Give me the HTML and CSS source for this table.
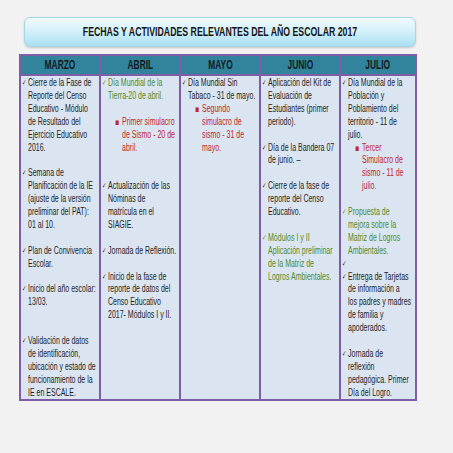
FILE: index.html
```html
<!DOCTYPE html>
<html lang="es">
<head>
<meta charset="utf-8">
<title>Fechas y actividades relevantes del año escolar 2017</title>
<link rel="stylesheet" href="styles.css">
</head>
<body>
<div class="page">
  <div class="title"><span class="narrow">FECHAS Y ACTIVIDADES RELEVANTES DEL AÑO ESCOLAR 2017</span></div>
  <div class="grid">
    <div class="head"><span class="narrow">MARZO</span></div>
    <div class="head"><span class="narrow">ABRIL</span></div>
    <div class="head"><span class="narrow">MAYO</span></div>
    <div class="head"><span class="narrow">JUNIO</span></div>
    <div class="head"><span class="narrow">JULIO</span></div>

    <div class="cell"><div class="col">
      <div class="item"><span class="chk">✓</span><span>Cierre de la Fase de<br>Reporte del Censo<br>Educativo - Módulo<br>de Resultado del<br>Ejercicio Educativo<br>2016.</span></div>
      <div class="item gap1"><span class="chk">✓</span><span>Semana de<br>Planificación de la IE<br>(ajuste de la versión<br>preliminar del PAT):<br>01 al 10.</span></div>
      <div class="item gap1"><span class="chk">✓</span><span>Plan de Convivencia<br>Escolar.</span></div>
      <div class="item gap1"><span class="chk">✓</span><span>Inicio del año escolar:<br>13/03.</span></div>
      <div class="item gap2"><span class="chk">✓</span><span>Validación de datos<br>de identificación,<br>ubicación y estado de<br>funcionamiento de la<br>IE en ESCALE.</span></div>
    </div></div>

    <div class="cell"><div class="col">
      <div class="item green"><span class="chk">✓</span><span>Día Mundial de la<br>Tierra-20 de abril.</span></div>
      <div class="item sub red gap1"><span class="sq">▪</span><span>Primer simulacro<br>de Sismo - 20 de<br>abril.</span></div>
      <div class="item gap2"><span class="chk">✓</span><span>Actualización de las<br>Nóminas de<br>matrícula en el<br>SIAGIE.</span></div>
      <div class="item gap1"><span class="chk">✓</span><span>Jornada de Reflexión.</span></div>
      <div class="item gap1"><span class="chk">✓</span><span>Inicio de la fase de<br>reporte de datos del<br>Censo Educativo<br>2017- Módulos I y II.</span></div>
    </div></div>

    <div class="cell"><div class="col">
      <div class="item"><span class="chk">✓</span><span>Día Mundial Sin<br>Tabaco - 31 de mayo.</span></div>
      <div class="item sub red"><span class="sq">▪</span><span>Segundo<br>simulacro de<br>sismo - 31 de<br>mayo.</span></div>
    </div></div>

    <div class="cell"><div class="col">
      <div class="item"><span class="chk">✓</span><span>Aplicación del Kit de<br>Evaluación de<br>Estudiantes (primer<br>periodo).</span></div>
      <div class="item gap1"><span class="chk">✓</span><span>Día de la Bandera 07<br>de junio. –</span></div>
      <div class="item gap1"><span class="chk">✓</span><span>Cierre de la fase de<br>reporte del Censo<br>Educativo.</span></div>
      <div class="item green gap1"><span class="chk">✓</span><span>Módulos I y II<br>Aplicación preliminar<br>de la Matriz de<br>Logros Ambientales.</span></div>
    </div></div>

    <div class="cell"><div class="col">
      <div class="item"><span class="chk">✓</span><span>Día Mundial de la<br>Población y<br>Poblamiento del<br>territorio - 11 de<br>julio.</span></div>
      <div class="item sub red"><span class="sq">▪</span><span>Tercer<br>Simulacro de<br>sismo - 11 de<br>julio.</span></div>
      <div class="item green gap1"><span class="chk">✓</span><span>Propuesta de<br>mejora sobre la<br>Matriz de Logros<br>Ambientales.</span></div>
      <div class="item"><span class="chk">✓</span><span></span></div>
      <div class="item"><span class="chk">✓</span><span>Entrega de Tarjetas<br>de información a<br>los padres y madres<br>de familia y<br>apoderados.</span></div>
      <div class="item gap1"><span class="chk">✓</span><span>Jornada de<br>reflexión<br>pedagógica. Primer<br>Día del Logro.</span></div>
    </div></div>
  </div>
</div>
</body>
</html>
```

FILE: styles.css
```css
/* Text is condensed horizontally (scaleX 0.7), matching the squeezed
   slide this sheet reproduces; boxes keep their real widths. */
html, body {
  margin: 0;
  padding: 0;
  background: #f2f2f2;
}

body {
  font-family: "Liberation Sans", Arial, sans-serif;
  color: #1e1e1e;
}

.page {
  padding: 17px 0 0 19px;
  width: 398px;
}

.narrow {
  display: inline-block;
  white-space: nowrap;
  transform: scaleX(0.7);
}

.title {
  margin-left: 5px;
  width: 392px;
  height: 30px;
  box-sizing: border-box;
  border: 1px solid #a9d4e6;
  border-radius: 6px;
  background: linear-gradient(#f1fbfe 0%, #d6f1fa 45%, #aadff2 100%);
  box-shadow: 0 1px 2px rgba(0, 0, 0, 0.18);
  display: flex;
  align-items: center;
  justify-content: center;
  font-weight: bold;
  font-size: 12.5px;
  color: #161616;
  margin-bottom: 7px;
}

.grid {
  display: grid;
  grid-template-columns: 78px 78px 78px 78px 74px;
  grid-template-rows: 18px 323px;
  gap: 2px;
  background: #7d5da6;
  border: 2px solid #7d5da6;
  width: 398px;
  box-sizing: border-box;
  box-shadow: 0 2px 0 #ffffff;
}

.head {
  background: #31849b;
  display: flex;
  align-items: center;
  justify-content: center;
  font-weight: bold;
  font-size: 12px;
  color: #111a1f;
}

.cell {
  background: #dbe5f1;
  padding: 1px 0 0 1px;
  min-width: 0;
}

.col {
  width: 104px;
  transform: scaleX(0.7);
  transform-origin: 0 0;
  font-size: 10px;
  line-height: 12.9px;
  white-space: nowrap;
}

.item {
  display: grid;
  grid-template-columns: 8.6px auto;
}

.item.gap1 { margin-top: 12.9px; }
.item.gap2 { margin-top: 25.8px; }

.chk {
  font-family: "DejaVu Sans", sans-serif;
  font-size: 7.5px;
}

.item.sub {
  margin-left: 18.6px;
  grid-template-columns: 10px auto;
}

.sq {
  font-family: "DejaVu Sans", sans-serif;
  font-size: 9px;
}

.green { color: #4f8a2c; }
.red { color: #c0272d; }
```
